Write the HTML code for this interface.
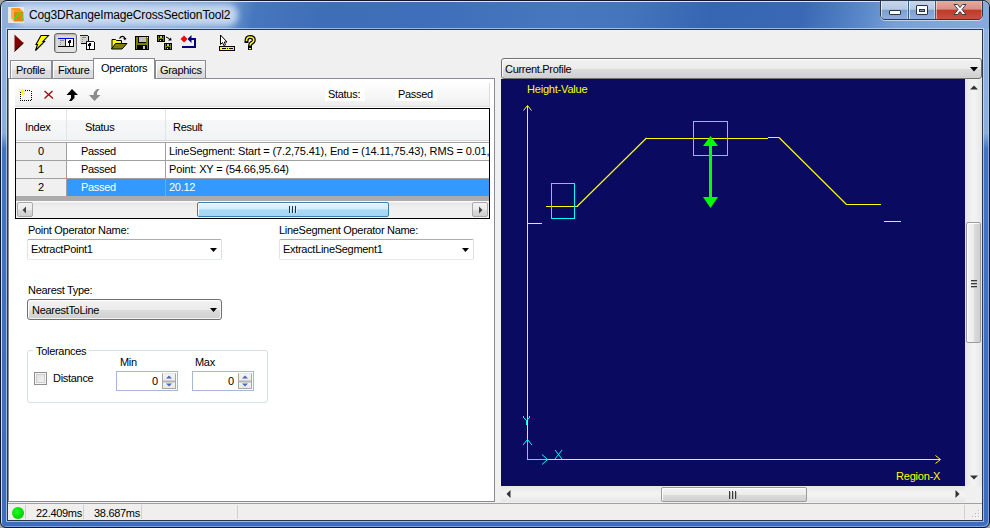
<!DOCTYPE html>
<html><head><meta charset="utf-8">
<style>
*{box-sizing:border-box}
html,body{margin:0;padding:0}
body{width:990px;height:528px;overflow:hidden;position:relative;background:#a4a4a4;font-family:"Liberation Sans",sans-serif;font-size:11px;color:#000;letter-spacing:-0.3px;line-height:13px;white-space:nowrap}
.a{position:absolute}
#frame{left:0;top:0;width:990px;height:528px;border:1px solid #101828;border-radius:7px 7px 6px 6px;background:linear-gradient(180deg,#92b3e0 0px,#8aaedc 132px,#4274c4 148px,#3c6dc0 100%);overflow:hidden;box-shadow:inset 1px 1px 0 rgba(235,244,255,.8),inset -1px -1px 0 rgba(200,220,250,.5)}
#title{left:1px;top:1px;width:988px;height:27px;background:linear-gradient(100deg,#90b0dc 0px,#86a8d8 120px,#6a96d0 225px,#4676be 250px,#3f6eb8 320px,#3f6fba 430px,#4777be 560px,#4474bc 620px,#3666b2 700px,#3a68b4 790px,#5a88ca 850px,#7aa0d8 885px,#88acdc 990px)}
#titletxt{left:29px;top:9px;font-size:12px;letter-spacing:-0.15px;color:#000}
#glow{left:14px;top:4px;width:224px;height:22px;border-radius:10px;background:rgba(212,226,245,.85);filter:blur(3px)}
#client{left:7px;top:29px;width:976px;height:492px;border:1px solid #283850;background:#f0f0f0;box-shadow:0 0 0 1px rgba(220,235,250,.6)}
.tab{top:60px;height:19px;border:1px solid #898c95;border-bottom:none;background:linear-gradient(180deg,#f4f4f4 0%,#ececec 48%,#dedede 52%,#d8d8d8 100%);padding:3px 0 0 5px;box-shadow:inset 1px 1px 0 #fff}
.tab.sel{top:58px;height:21px;background:#fff;z-index:3;box-shadow:none}
#page{left:8px;top:78px;width:487px;height:424px;border:1px solid #898c95;background:#fff}
.cell{height:18px;padding-top:3px}
.sb-btn{width:16px;height:14px}
</style></head><body>
<div id="frame" class="a">
  <div id="title" class="a"></div>
</div>
<div id="glow" class="a"></div>
<div id="titletxt" class="a">Cog3DRangeImageCrossSectionTool2</div>
<!-- app icon -->
<svg class="a" style="left:8px;top:7px" width="16" height="16" viewBox="0 0 16 16">
  <rect x="0" y="0" width="16" height="16" fill="#ebe8e2"/>
  <polygon points="3,1 11.5,1 15.5,5 6,5" fill="#ff9818"/>
  <polygon points="3,1 6,5 6,14.5 3,11" fill="#ffac50"/>
  <polygon points="6,5 15.5,5 15.5,14.5 6,14.5" fill="#e48214"/>
  <polyline points="6,12.5 9.5,8.5 9.5,6.5 13.7,6.5 13.7,12.5 16,12.5" fill="none" stroke="#10ff10" stroke-width="1.3"/>
</svg>
<!-- caption buttons -->
<div class="a" style="left:880px;top:0;width:103px;height:20px;border:1px solid #2c3a4e;border-radius:0 0 5px 5px;overflow:hidden;background:#3c5a88;box-shadow:0 1px 0 rgba(255,255,255,.55)">
  <div class="a" style="left:0;top:0;width:27px;height:18px;background:linear-gradient(180deg,#c7d6ea 0%,#b6c9e4 45%,#7f9fcf 52%,#8fb0de 100%);box-shadow:inset 1px 0 0 rgba(255,255,255,.6),inset -1px 0 0 rgba(255,255,255,.4)"></div>
  <div class="a" style="left:28px;top:0;width:26px;height:18px;background:linear-gradient(180deg,#c7d6ea 0%,#b6c9e4 45%,#7f9fcf 52%,#8fb0de 100%);box-shadow:inset 1px 0 0 rgba(255,255,255,.6),inset -1px 0 0 rgba(255,255,255,.4)"></div>
  <div class="a" style="left:55px;top:0;width:46px;height:18px;background:linear-gradient(180deg,#e6aaa2 0%,#d89084 45%,#c03a26 52%,#c85040 100%);box-shadow:inset 1px 0 0 rgba(255,255,255,.5),inset -1px 0 0 rgba(255,255,255,.3)"></div>
</div>
<div class="a" style="left:889px;top:10px;width:12px;height:5px;background:#fff;border:1px solid #2a3344;border-radius:1px"></div>
<div class="a" style="left:916px;top:5px;width:12px;height:10px;background:#fff;border:1px solid #2a3344;border-radius:1px"><div class="a" style="left:2px;top:3px;width:6px;height:3px;background:#7c9acb;border:1px solid #2a3344"></div></div>
<svg class="a" style="left:952px;top:3px" width="16" height="13" viewBox="0 0 16 13">
  <path d="M2,1.5 L5.5,1.5 L8,4.5 L10.5,1.5 L14,1.5 L10,6.5 L14,11.5 L10.5,11.5 L8,8.5 L5.5,11.5 L2,11.5 L6,6.5 Z" fill="#fff" stroke="#3a3a48" stroke-width="1"/>
</svg>

<div id="client" class="a"></div>

<!-- toolbar -->
<div class="a" style="left:54px;top:33px;width:23px;height:20px;border:1px solid #6a6a6a;border-radius:3px;background:linear-gradient(180deg,#d6d6d6,#e4e4e4);box-shadow:inset 1px 1px 1px #b0b0b0"></div>
<svg class="a" style="left:0;top:30px" width="270" height="26" viewBox="0 30 270 26">
  <polygon points="14.5,34.5 23.5,43 14.5,51.5" fill="#800000"/>
  <path d="M23.5,43 L14.5,51.5" stroke="#000" stroke-width="1"/>
  <polygon points="41,35.5 48.5,35.5 43,41.5 44.5,41.5 35.5,50.5 37.5,44.5 36,44.5" fill="#ffff00" stroke="#000" stroke-width="1.1" stroke-linejoin="miter"/>
  <g shape-rendering="crispEdges">
    <rect x="58" y="38" width="7" height="8" fill="#d4d4d4"/><rect x="58" y="38" width="7" height="1" fill="#0000ff"/>
    <rect x="65" y="38" width="1" height="8" fill="#202020"/>
    <rect x="66" y="38" width="7" height="8" fill="#fff"/><rect x="66" y="38" width="7" height="1" fill="#0000ff"/>
    <rect x="58" y="46" width="16" height="1" fill="#000"/><rect x="73" y="38" width="1" height="9" fill="#000"/>
    <rect x="60" y="40" width="4" height="1" fill="#8a8a8a"/><rect x="60" y="42" width="1" height="1" fill="#8a8a8a"/><rect x="60" y="44" width="1" height="1" fill="#8a8a8a"/>
    <rect x="68" y="40" width="3" height="3" fill="#000"/><rect x="69" y="43" width="1" height="3" fill="#000"/><rect x="68" y="40" width="1" height="1" fill="#fff"/>

    <rect x="80" y="35" width="8" height="8" fill="#d4d4d4"/><rect x="80" y="35" width="8" height="1" fill="#0000ff"/>
    <rect x="88" y="36" width="1" height="8" fill="#000"/><rect x="81" y="43" width="8" height="1" fill="#000"/>
    <rect x="82" y="37" width="4" height="1" fill="#8a8a8a"/><rect x="82" y="39" width="1" height="1" fill="#8a8a8a"/><rect x="82" y="41" width="1" height="1" fill="#8a8a8a"/>
    <rect x="86" y="41" width="8" height="8" fill="#fff"/><rect x="86" y="41" width="8" height="1" fill="#0000ff"/>
    <rect x="94" y="42" width="1" height="8" fill="#000"/><rect x="86" y="49" width="9" height="1" fill="#000"/><rect x="86" y="42" width="1" height="7" fill="#000"/>
    <rect x="88" y="43" width="3" height="3" fill="#000"/><rect x="89" y="46" width="1" height="3" fill="#000"/><rect x="88" y="43" width="1" height="1" fill="#fff"/>

    <rect x="135" y="36" width="14" height="14" fill="#000"/>
    <rect x="136" y="37" width="12" height="12" fill="#808000"/>
    <rect x="138" y="37" width="8" height="6" fill="#000"/><rect x="139" y="37" width="7" height="5" fill="#c0c0c0"/>
    <rect x="137" y="45" width="10" height="4" fill="#000"/><rect x="143" y="46" width="2" height="3" fill="#c8c8c8"/>
    <rect x="147" y="37" width="1" height="1" fill="#fff"/>

    <rect x="157" y="35" width="8" height="7" fill="#000"/><rect x="158" y="36" width="1" height="5" fill="#808000"/><rect x="163" y="36" width="1" height="5" fill="#808000"/><rect x="158" y="38" width="6" height="1" fill="#808000"/><rect x="160" y="36" width="2" height="2" fill="#c0c0c0"/><rect x="160" y="40" width="1" height="1" fill="#ddd"/>
    <rect x="164" y="43" width="8" height="7" fill="#000"/><rect x="165" y="44" width="1" height="5" fill="#808000"/><rect x="170" y="44" width="1" height="5" fill="#808000"/><rect x="165" y="46" width="6" height="1" fill="#808000"/><rect x="167" y="44" width="2" height="2" fill="#c0c0c0"/><rect x="167" y="48" width="1" height="1" fill="#ddd"/>

    <rect x="182" y="46" width="14" height="2" fill="#000080"/>
    <rect x="194" y="38" width="2" height="9" fill="#000080"/>
    <rect x="190" y="38" width="5" height="2" fill="#000080"/>

    <rect x="219" y="46" width="16" height="5" fill="#000"/><rect x="220" y="47" width="14" height="3" fill="#ffff00"/>
    <rect x="222" y="48" width="4" height="1" fill="#000"/><rect x="227" y="48" width="1" height="1" fill="#000"/><rect x="229" y="48" width="4" height="1" fill="#000"/>
  </g>
  <path d="M112,49 L112,39.5 L115.5,39.5 L116.5,40.5 L121.5,40.5 L121.5,43.5" fill="#ffff00" stroke="#000"/>
  <polygon points="111.5,49 115.5,43.5 127,43.5 122,49" fill="#808000" stroke="#000"/>
  <path d="M119.5,38.5 Q121.5,35.5 124,37 L125,38.5" fill="none" stroke="#000" stroke-width="1.2"/>
  <polygon points="123,38 126.5,38 125,40.5" fill="#000"/>
  <path d="M166,37 L169,38.5 L170,40" stroke="#000" stroke-width="1" fill="none"/><polygon points="168,40.5 171.5,40.5 171,37.5" fill="#000"/>
  <polygon points="184,35.5 187.5,39 184,42.5 180.5,39" fill="#ff0000"/>
  <polygon points="187.5,39 191.5,35 191.5,43" fill="#000080"/>
  <polygon points="220.5,35 220.5,44.5 222.5,42.5 223.8,45.5 225.5,44.8 224.3,42 227,42" fill="#fff" stroke="#000" stroke-width="1"/>
  <path d="M246.5,41 Q246.5,37 250,37 Q253.8,37 253.8,40 Q253.8,42 251.5,43 Q250,44 250,46" fill="none" stroke="#000" stroke-width="4" stroke-linecap="square"/>
  <rect x="248" y="47" width="4" height="3" fill="#000"/>
  <path d="M246.5,41 Q246.5,37 250,37 Q253.8,37 253.8,40 Q253.8,42 251.5,43 Q250,44 250,45.5" fill="none" stroke="#ffff00" stroke-width="1.6"/>
  <rect x="249" y="48" width="2" height="1.2" fill="#ffff00"/>
</svg>
<!-- tabs -->
<div class="a tab" style="left:10px;width:42px">Profile</div>
<div class="a tab" style="left:52px;width:42px">Fixture</div>
<div class="a tab sel" style="left:93px;width:62px;padding-top:3px;padding-left:7px">Operators</div>
<div class="a tab" style="left:155px;width:51px;padding-left:4px">Graphics</div>
<div id="page" class="a"></div>

<!-- tool strip in page -->
<div class="a" style="left:15px;top:83px;width:475px;height:24px;background:linear-gradient(180deg,#fdfdfd 0%,#f6f6f6 60%,#ececec 100%);border-bottom:1px solid #dedede;border-right:1px solid #dcdcdc"></div>
<svg class="a" style="left:15px;top:84px" width="90" height="22" viewBox="15 84 90 22">
  <g shape-rendering="crispEdges" fill="#000">
    <rect x="20" y="100" width="1" height="1"/><rect x="22" y="100" width="1" height="1"/><rect x="24" y="100" width="1" height="1"/><rect x="26" y="100" width="1" height="1"/><rect x="28" y="100" width="1" height="1"/><rect x="30" y="100" width="1" height="1"/>
    <rect x="20" y="92" width="1" height="1"/><rect x="20" y="94" width="1" height="1"/><rect x="20" y="96" width="1" height="1"/><rect x="20" y="98" width="1" height="1"/>
    <rect x="31" y="91" width="1" height="1"/><rect x="31" y="93" width="1" height="1"/><rect x="31" y="95" width="1" height="1"/><rect x="31" y="97" width="1" height="1"/><rect x="31" y="99" width="1" height="1"/>
    <rect x="25" y="90" width="1" height="1"/><rect x="27" y="90" width="1" height="1"/><rect x="29" y="90" width="1" height="1"/>
  </g>
  <g shape-rendering="crispEdges" fill="#ffff00">
    <rect x="22" y="89" width="1" height="6"/><rect x="19" y="91" width="7" height="1"/><rect x="21" y="90" width="3" height="3"/>
    <rect x="25" y="89" width="1" height="1"/><rect x="19" y="89" width="1" height="1"/><rect x="24" y="93" width="1" height="1"/>
  </g>
  <path d="M44.5,91 L53,98.5 M52.5,91 L44.5,98.5" stroke="#9a1010" stroke-width="1.4"/>
  <polygon points="72,89 78,95 74.5,95 74.5,98 71.5,101 69,101 71,98 71,95 66.5,95" fill="#000"/>
  <polygon points="94.5,101 100.5,95 97,95 97,92.5 99.5,89 97,89 94,92 93.5,95 89,95" fill="#8c8c8c"/>
</svg>
<div class="a" style="left:325px;top:88px;width:40px;height:13px;background:#fff;padding-left:3px">Status:</div>
<div class="a" style="left:395px;top:88px;width:42px;height:13px;background:#fff;padding-left:3px">Passed</div>

<!-- grid -->
<div class="a" style="left:15px;top:108px;width:475px;height:111px;border:1px solid #000;background:#fff;overflow:hidden">
  <div class="a" style="left:0;top:0;width:473px;height:32px;background:linear-gradient(180deg,#fff 0px,#fff 11px,#f6f7f9 11px,#f2f3f5 31px);border-bottom:1px solid #d5d5d5"></div>
  <div class="a" style="left:50px;top:0;width:1px;height:31px;background:#e2e3e5"></div>
  <div class="a" style="left:149px;top:0;width:1px;height:31px;background:#e2e3e5"></div>
  <div class="a" style="left:9px;top:12px">Index</div>
  <div class="a" style="left:69px;top:12px">Status</div>
  <div class="a" style="left:157px;top:12px">Result</div>
  <div class="a" style="left:0;top:33px;width:473px;height:1px;background:#a0a0a0"></div>
  <div class="a" style="left:0;top:34px;width:50px;height:53px;background:#f0f0f0"></div>
  <div class="a" style="left:51px;top:70px;width:98px;height:17px;background:#3399ff"></div>
  <div class="a" style="left:150px;top:70px;width:323px;height:17px;background:#3399ff"></div>
  <div class="a" style="left:50px;top:34px;width:1px;height:53px;background:#a0a0a0"></div>
  <div class="a" style="left:149px;top:34px;width:1px;height:53px;background:#a0a0a0"></div>
  <div class="a" style="left:0;top:51px;width:473px;height:1px;background:#a0a0a0"></div>
  <div class="a" style="left:0;top:69px;width:473px;height:1px;background:#a0a0a0"></div>
  <div class="a" style="left:0;top:87px;width:473px;height:5px;background:#ababab"></div>
  <div class="a" style="left:22px;top:36px">0</div>
  <div class="a" style="left:22px;top:54px">1</div>
  <div class="a" style="left:22px;top:72px">2</div>
  <div class="a" style="left:65px;top:36px">Passed</div>
  <div class="a" style="left:65px;top:54px">Passed</div>
  <div class="a" style="left:65px;top:72px;color:#fff">Passed</div>
  <div class="a" style="left:153px;top:36px;letter-spacing:-0.15px">LineSegment: Start = (7.2,75.41), End = (14.11,75.43), RMS = 0.01, Angle</div>
  <div class="a" style="left:153px;top:54px;letter-spacing:-0.15px">Point: XY = (54.66,95.64)</div>
  <div class="a" style="left:153px;top:72px;color:#fff">20.12</div>
  <div class="a" style="left:0;top:92px;width:473px;height:17px;background:linear-gradient(180deg,#fafafa 0,#fafafa 1px,#e6e6e6 2px,#efefef 6px,#f2f2f2 100%)"></div>
</div>
<!-- grid hscroll -->
<div class="a" style="left:17px;top:202px;width:16px;height:15px;border:1px solid #aaaaaa;border-radius:2px;background:linear-gradient(180deg,#f2f2f2 0%,#ebebeb 50%,#dcdcdc 51%,#cfcfcf 100%)"></div>
<svg class="a" style="left:22px;top:206px" width="5" height="8" viewBox="0 0 5 8"><polygon points="4,0.5 0.5,4 4,7.5" fill="#444"/></svg>
<div class="a" style="left:472px;top:202px;width:16px;height:15px;border:1px solid #aaaaaa;border-radius:2px;background:linear-gradient(180deg,#f2f2f2 0%,#ebebeb 50%,#dcdcdc 51%,#cfcfcf 100%)"></div>
<svg class="a" style="left:478px;top:206px" width="5" height="8" viewBox="0 0 5 8"><polygon points="1,0.5 4.5,4 1,7.5" fill="#444"/></svg>
<div class="a" style="left:197px;top:202px;width:192px;height:15px;border:1px solid #3c7fb1;border-radius:2px;background:linear-gradient(180deg,#e3f4fc 0%,#d6eefb 45%,#a9dbf6 52%,#a4d6f2 100%);box-shadow:inset 1px 1px 0 #f5fbff"></div>
<svg class="a" style="left:288px;top:205px" width="10" height="10" viewBox="0 0 10 10" shape-rendering="crispEdges"><path d="M1.5,1 L1.5,8 M4.5,1 L4.5,8 M7.5,1 L7.5,8" stroke="#1a3050"/><path d="M2.5,2 L2.5,8 M5.5,2 L5.5,8 M8.5,2 L8.5,8" stroke="#e0f0fa"/></svg>

<!-- form -->
<div class="a" style="left:28px;top:224px">Point Operator Name:</div>
<div class="a" style="left:27px;top:239px;width:195px;height:21px;border:1px solid;border-color:#abadb3 #dbdfe6 #e3e9ef #e2e3ea;border-radius:2px;background:#fff;padding:3px 0 0 3px">ExtractPoint1</div>
<svg class="a" style="left:210px;top:248px" width="7" height="4" viewBox="0 0 7 4"><polygon points="0,0 7,0 3.5,4" fill="#000"/></svg>
<div class="a" style="left:279px;top:224px">LineSegment Operator Name:</div>
<div class="a" style="left:279px;top:239px;width:195px;height:21px;border:1px solid;border-color:#abadb3 #dbdfe6 #e3e9ef #e2e3ea;border-radius:2px;background:#fff;padding:3px 0 0 3px">ExtractLineSegment1</div>
<svg class="a" style="left:462px;top:248px" width="7" height="4" viewBox="0 0 7 4"><polygon points="0,0 7,0 3.5,4" fill="#000"/></svg>

<div class="a" style="left:28px;top:284px">Nearest Type:</div>
<div class="a" style="left:27px;top:299px;width:195px;height:21px;border:1px solid #707070;border-radius:3px;background:linear-gradient(180deg,#f2f2f2 0%,#ebebeb 50%,#dddddd 51%,#cfcfcf 100%);box-shadow:inset 1px 1px 0 #fff,inset -1px -1px 0 #f4f4f4;padding:4px 0 0 4px">NearestToLine</div>
<svg class="a" style="left:210px;top:308px" width="7" height="4" viewBox="0 0 7 4"><polygon points="0,0 7,0 3.5,4" fill="#000"/></svg>

<!-- tolerances -->
<div class="a" style="left:27px;top:350px;width:241px;height:53px;border:1px solid #d5dfe5;border-radius:3px"></div>
<div class="a" style="left:33px;top:345px;background:#fff;padding:0 3px">Tolerances</div>
<div class="a" style="left:120px;top:356px">Min</div>
<div class="a" style="left:195px;top:356px">Max</div>
<div class="a" style="left:34px;top:372px;width:13px;height:13px;border:1px solid #8e8f8f;background:linear-gradient(135deg,#dcdcdc,#f6f6f6);box-shadow:inset 0 0 0 1px #f4f4f4,inset 0 0 0 2px #cfcfcf"></div>
<div class="a" style="left:53px;top:372px">Distance</div>
<div class="a" style="left:116px;top:371px;width:62px;height:20px;border:1px solid #a4b9d8;background:#fff"></div>
<div class="a" style="left:152px;top:375px">0</div>
<div class="a" style="left:162px;top:373px;width:14px;height:16px;border:1px solid #a8a8a8;border-top-color:#e6e6e6;background:linear-gradient(180deg,#f4f4f4 0,#ececec 6px,#b4b4b4 7px,#b4b4b4 8px,#f2f2f2 9px,#e8e8e8 100%)"></div>
<svg class="a" style="left:166px;top:375px" width="6" height="12" viewBox="0 0 6 12"><polygon points="0,3.5 6,3.5 3,0.5" fill="#4a64c4"/><polygon points="0,8.5 6,8.5 3,11.5" fill="#4a64c4"/></svg>
<div class="a" style="left:192px;top:371px;width:62px;height:20px;border:1px solid #a4b9d8;background:#fff"></div>
<div class="a" style="left:228px;top:375px">0</div>
<div class="a" style="left:238px;top:373px;width:14px;height:16px;border:1px solid #a8a8a8;border-top-color:#e6e6e6;background:linear-gradient(180deg,#f4f4f4 0,#ececec 6px,#b4b4b4 7px,#b4b4b4 8px,#f2f2f2 9px,#e8e8e8 100%)"></div>
<svg class="a" style="left:242px;top:375px" width="6" height="12" viewBox="0 0 6 12"><polygon points="0,3.5 6,3.5 3,0.5" fill="#4a64c4"/><polygon points="0,8.5 6,8.5 3,11.5" fill="#4a64c4"/></svg>

<!-- right panel -->
<div class="a" style="left:501px;top:58px;width:481px;height:21px;border:1px solid #707070;border-radius:3px;background:linear-gradient(180deg,#f2f2f2 0%,#ebebeb 50%,#dddddd 51%,#cfcfcf 100%);box-shadow:inset 1px 1px 0 #fff;padding:4px 0 0 3px">Current.Profile</div>
<svg class="a" style="left:970px;top:67px" width="8" height="5" viewBox="0 0 8 5"><polygon points="0,0 8,0 4,4.5" fill="#000"/></svg>
<div class="a" style="left:501px;top:79px;width:464px;height:407px;background:#0a0a60"></div>
<!-- vscroll -->
<div class="a" style="left:965px;top:79px;width:17px;height:407px;background:linear-gradient(90deg,#e6e6e6,#f2f2f2 40%,#f2f2f2 60%,#e6e6e6)"></div>
<svg class="a" style="left:970px;top:85px" width="8" height="5" viewBox="0 0 8 5"><polygon points="0,4.5 8,4.5 4,0.5" fill="#333"/></svg>
<svg class="a" style="left:970px;top:475px" width="8" height="5" viewBox="0 0 8 5"><polygon points="0,0.5 8,0.5 4,4.5" fill="#333"/></svg>
<div class="a" style="left:966px;top:222px;width:15px;height:121px;border:1px solid #9c9c9c;border-radius:2px;background:linear-gradient(90deg,#f4f4f4 0%,#ececec 50%,#dcdcdc 51%,#cfcfcf 100%);box-shadow:inset 1px 1px 0 #fff"></div>
<svg class="a" style="left:969px;top:278px" width="9" height="10" viewBox="0 0 9 10" shape-rendering="crispEdges"><path d="M1.5,2.5 L7.5,2.5 M1.5,5.5 L7.5,5.5 M1.5,8.5 L7.5,8.5" stroke="#3a3a3a"/><path d="M1.5,3.5 L7.5,3.5 M1.5,6.5 L7.5,6.5 M1.5,9.5 L7.5,9.5" stroke="#b0b0b0"/></svg>
<!-- hscroll -->
<div class="a" style="left:501px;top:486px;width:464px;height:16px;background:linear-gradient(180deg,#e6e6e6,#f2f2f2 40%,#f2f2f2 60%,#e6e6e6)"></div>
<div class="a" style="left:965px;top:486px;width:17px;height:16px;background:#f0f0f0"></div>
<svg class="a" style="left:506px;top:490px" width="5" height="8" viewBox="0 0 5 8"><polygon points="4.5,0 0.5,4 4.5,8" fill="#333"/></svg>
<svg class="a" style="left:955px;top:490px" width="5" height="8" viewBox="0 0 5 8"><polygon points="0.5,0 4.5,4 0.5,8" fill="#333"/></svg>
<div class="a" style="left:661px;top:487px;width:146px;height:15px;border:1px solid #9c9c9c;border-radius:2px;background:linear-gradient(180deg,#f4f4f4 0%,#ececec 50%,#dcdcdc 51%,#cfcfcf 100%);box-shadow:inset 1px 1px 0 #fff"></div>
<svg class="a" style="left:728px;top:490px" width="10" height="10" viewBox="0 0 10 10" shape-rendering="crispEdges"><path d="M1.5,1 L1.5,9 M4.5,1 L4.5,9 M7.5,1 L7.5,9" stroke="#3a3a3a"/><path d="M2.5,2 L2.5,9 M5.5,2 L5.5,9 M8.5,2 L8.5,9" stroke="#b8b8b8"/></svg>

<!-- status bar -->
<div class="a" style="left:8px;top:503px;width:974px;height:17px;background:#f0efed;border-top:1px solid #a0a0a0"></div>
<div class="a" style="left:25px;top:505px;width:1px;height:14px;background:#d0d0d0"></div>
<div class="a" style="left:83px;top:505px;width:1px;height:14px;background:#d0d0d0"></div>
<div class="a" style="left:141px;top:505px;width:1px;height:14px;background:#d0d0d0"></div>
<div class="a" style="left:237px;top:505px;width:1px;height:14px;background:#d0d0d0"></div>
<div class="a" style="left:964px;top:505px;width:1px;height:14px;background:#d0d0d0"></div>
<div class="a" style="left:12px;top:507px;width:12px;height:12px;border-radius:50%;background:radial-gradient(circle at 40% 40%,#20ff20,#00d000 70%,#00a000)"></div>
<div class="a" style="left:36px;top:507px">22.409ms</div>
<div class="a" style="left:94px;top:507px">38.687ms</div>
<svg class="a" style="left:970px;top:509px" width="11" height="10" viewBox="0 0 11 10" shape-rendering="crispEdges"><g fill="#fff"><rect x="9" y="2" width="1" height="1"/><rect x="6" y="5" width="1" height="1"/><rect x="9" y="5" width="1" height="1"/><rect x="3" y="8" width="1" height="1"/><rect x="6" y="8" width="1" height="1"/><rect x="9" y="8" width="1" height="1"/></g><g fill="#b8b8b8"><rect x="8" y="1" width="1" height="1"/><rect x="5" y="4" width="1" height="1"/><rect x="8" y="4" width="1" height="1"/><rect x="2" y="7" width="1" height="1"/><rect x="5" y="7" width="1" height="1"/><rect x="8" y="7" width="1" height="1"/></g></svg>

<!-- chart -->
<svg class="a" style="left:501px;top:79px" width="464" height="407" viewBox="501 79 464 407" shape-rendering="crispEdges">
  <g stroke="#ffff00" stroke-width="1" fill="none">
    <path d="M527.5,106 L527.5,459.5 L940,459.5"/>
    <path d="M523.5,110.5 L527.5,105.5 L531.5,110.5" shape-rendering="auto"/>
    <path d="M935.5,455.5 L940.5,459.5 L935.5,463.5" shape-rendering="auto"/>
    <path d="M527,223.5 L542,223.5"/>
    <path d="M546,206.5 L578,206.5"/>
    <path d="M577,206.5 L646.5,138" stroke-width="1.15" shape-rendering="auto"/>
    <path d="M646,138.5 L768,138.5 M768,137.5 L779,137.5"/>
    <path d="M779,137.5 L846.5,204.5" stroke-width="1.15" shape-rendering="auto"/>
    <path d="M846,204.5 L881,204.5"/>
    <path d="M884,221.5 L901,221.5"/>
  </g>
  <g stroke="#00ffff" stroke-width="1" fill="none">
    <rect x="551.5" y="183.5" width="23" height="35"/>
    <rect x="693.5" y="121.5" width="34" height="34"/>
    <path d="M527.5,459.5 L527.5,440 M527.5,459.5 L547,459.5"/>
    <path d="M523,445 L527.5,439.5 L532,445 M542,454.5 L547.5,459.5 L542,464.5" shape-rendering="auto"/>
    <path d="M523.5,415.5 L523.5,417.5 L526.5,420.5 L529.5,417.5 L529.5,415.5 M526.5,420 L526.5,425" shape-rendering="crispEdges"/>
    <path d="M555,450 L562,459 M562,450 L555,459" shape-rendering="auto"/>
  </g>
  <g fill="#00ff00" stroke="none">
    <rect x="709" y="144" width="3" height="55"/>
    <polygon points="710.5,136 718,146 703,146" shape-rendering="auto"/>
    <polygon points="710.5,208 718,197 703,197" shape-rendering="auto"/>
  </g>
</svg>
<div class="a" style="left:527px;top:83px;color:#ffff00;letter-spacing:-0.2px">Height-Value</div>
<div class="a" style="left:896px;top:470px;color:#ffff00;letter-spacing:-0.2px">Region-X</div>
</body></html>
